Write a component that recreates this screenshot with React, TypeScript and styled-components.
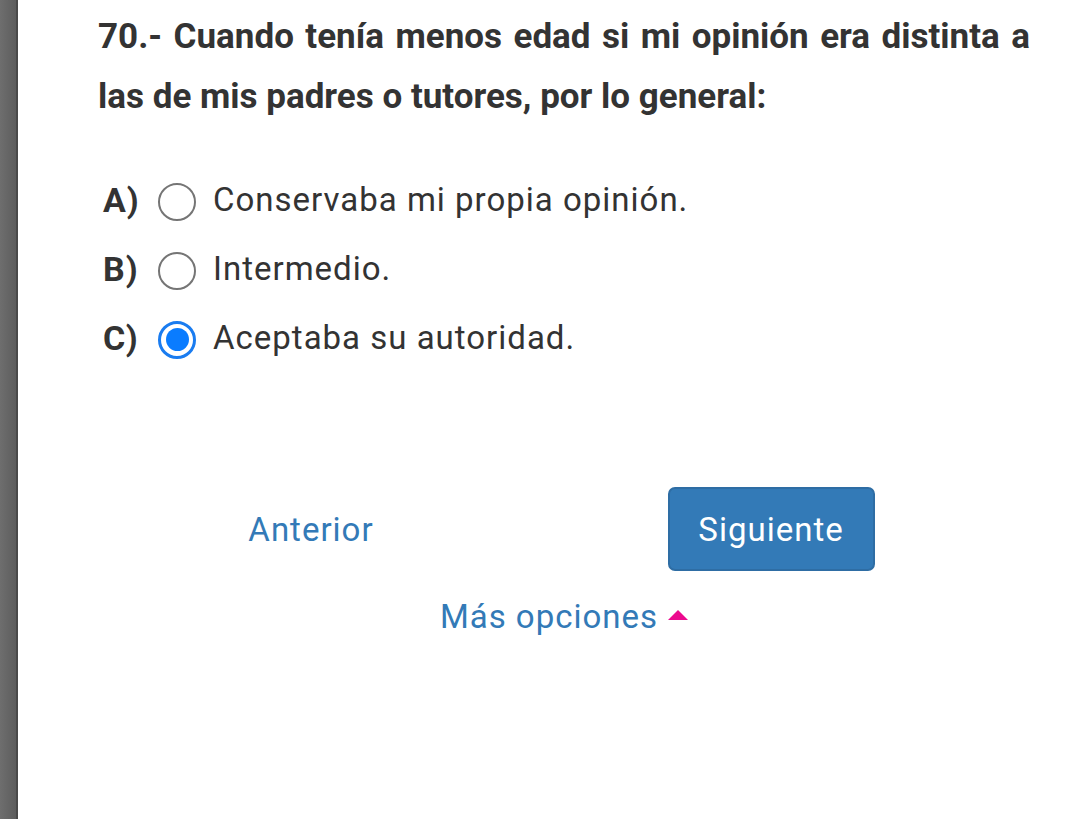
import styled, { createGlobalStyle } from "styled-components";

const GlobalStyle = createGlobalStyle`
  html, body {
    margin: 0;
    padding: 0;
    background: #ffffff;
  }
  body {
    font-family: Roboto, "Liberation Sans", Arial, sans-serif;
    color: #333333;
  }
`;

const options = [
  { key: "A)", text: "Conservaba mi propia opinión.", checked: false },
  { key: "B)", text: "Intermedio.", checked: false },
  { key: "C)", text: "Aceptaba su autoridad.", checked: true },
];

const App = () => {
  return (
    <>
      <GlobalStyle />
      <Page>
        <SideBar />
        <Main>
          <Question>
            70.- Cuando tenía menos edad si mi opinión era distinta a las de mis
            padres o tutores, por lo general:
          </Question>
          <OptionList>
            {options.map((o) => (
              <OptionRow key={o.key}>
                <OptionKey>{o.key}</OptionKey>
                <Radio $checked={o.checked} />
                <OptionText>{o.text}</OptionText>
              </OptionRow>
            ))}
          </OptionList>
          <NavRow>
            <NavCell>
              <LinkButton>Anterior</LinkButton>
            </NavCell>
            <NavCell>
              <PrimaryButton>Siguiente</PrimaryButton>
            </NavCell>
          </NavRow>
          <MoreRow>
            <MoreLink>
              Más opciones
              <Caret />
            </MoreLink>
          </MoreRow>
        </Main>
      </Page>
    </>
  );
};

const Page = styled.div`
  display: flex;
  width: 1080px;
  height: 819px;
  overflow: hidden;
`;

const SideBar = styled.div`
  width: 16px;
  flex-shrink: 0;
  background: linear-gradient(to right, #6e6e6e, #5d5d5d);
  border-right: 2px solid #4a4a4a;
`;

const Main = styled.div`
  flex: 1;
  display: flex;
  flex-direction: column;
`;

const Question = styled.h2`
  margin: 7px 0 0;
  padding: 0 50px 0 80px;
  font-size: 35px;
  line-height: 60px;
  font-weight: 700;
  text-align: justify;
  color: #333333;
`;

const OptionList = styled.div`
  display: flex;
  flex-direction: column;
  margin-top: 38px;
  padding-left: 85px;
`;

const OptionRow = styled.label`
  display: flex;
  align-items: center;
  height: 69px;
`;

const OptionKey = styled.span`
  width: 55px;
  font-size: 34px;
  font-weight: 700;
  letter-spacing: 1px;
  color: #333333;
`;

const Radio = styled.span<{ $checked: boolean }>`
  box-sizing: border-box;
  width: 38px;
  height: 38px;
  border-radius: 50%;
  border: ${(p) => (p.$checked ? "3px solid #1a7cf0" : "2px solid #757575")};
  display: flex;
  align-items: center;
  justify-content: center;
  margin-right: 17px;
  margin-top: 4px;

  &::after {
    content: "";
    display: ${(p) => (p.$checked ? "block" : "none")};
    width: 23px;
    height: 23px;
    border-radius: 50%;
    background: #0a7cff;
  }
`;

const OptionText = styled.span`
  font-size: 33px;
  color: #333333;
  letter-spacing: 1px;
`;

const NavRow = styled.div`
  display: flex;
  margin-top: 115px;
  padding-left: 63px;
`;

const NavCell = styled.div`
  width: 460px;
  display: flex;
  justify-content: center;
  align-items: center;
`;

const LinkButton = styled.button`
  border: none;
  background: transparent;
  font-family: inherit;
  font-size: 33px;
  letter-spacing: 1px;
  color: #337ab7;
  padding: 0;
`;

const PrimaryButton = styled.button`
  box-sizing: border-box;
  width: 207px;
  height: 84px;
  border-radius: 7px;
  border: 2px solid #2e6da4;
  background: #337ab7;
  color: #ffffff;
  font-family: inherit;
  font-size: 33px;
  letter-spacing: 1px;
`;

const MoreRow = styled.div`
  display: flex;
  justify-content: center;
  margin-top: 26px;
`;

const MoreLink = styled.span`
  position: relative;
  font-size: 33px;
  letter-spacing: 1px;
  color: #337ab7;
`;

const Caret = styled.span`
  position: absolute;
  left: calc(100% + 10px);
  top: 50%;
  margin-top: -7px;
  width: 0;
  height: 0;
  border-left: 10px solid transparent;
  border-right: 10px solid transparent;
  border-bottom: 10px solid #ec0a8e;
`;

export default App;
